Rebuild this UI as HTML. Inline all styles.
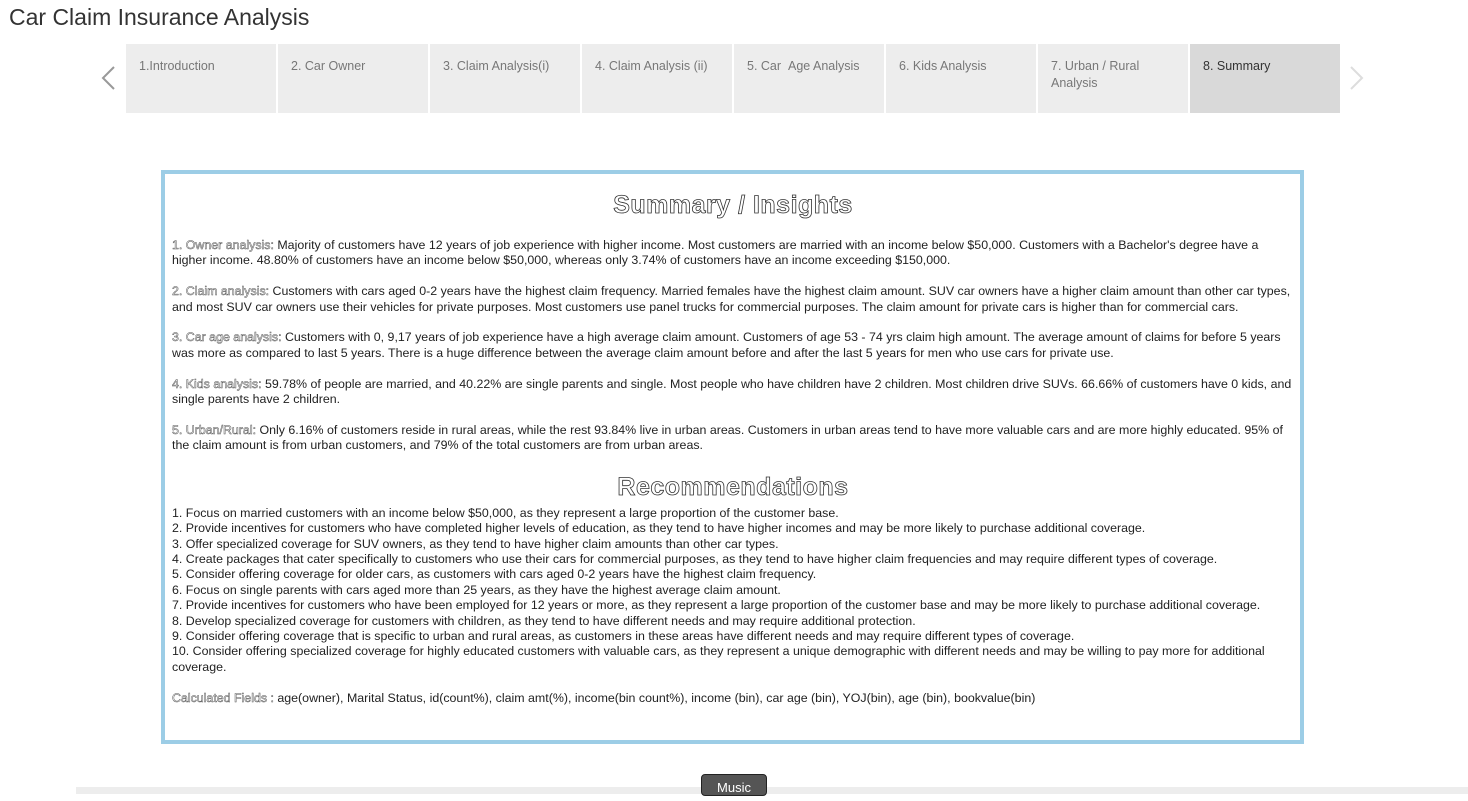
<!DOCTYPE html>
<html><head><meta charset="utf-8"><style>
body{margin:0;width:1468px;height:794px;background:#fff;font-family:"Liberation Sans",sans-serif;position:relative;overflow:hidden}
.title{position:absolute;left:9px;top:4px;font-size:23px;color:#333}
.tab{position:absolute;top:44px;width:150px;height:69px;background:#ededed;color:#777;font-size:12.5px;box-sizing:border-box;padding:14px 13px;line-height:17px}
.tab.sel{background:#d9d9d9;color:#333}
.arrow{position:absolute;top:66px;width:14px;height:24px}
.box{position:absolute;left:161px;top:170px;width:1143px;height:574px;border:4px solid #9ccde6;box-sizing:border-box;padding:0 6px 0 7px;font-size:12.4px;line-height:15.4px;color:#222}
h2{margin:0;text-align:center;font-size:25px;line-height:30px;font-weight:bold;color:#fff;-webkit-text-stroke:0.8px #333;letter-spacing:0.5px}
.o{color:#fff;-webkit-text-stroke:0.5px #555}
p{margin:0}
.bar{position:absolute;left:76px;top:787px;width:1392px;height:7px;background:#ededed}
.music{position:absolute;left:701px;top:774px;width:66px;height:22px;background:#555;border:1px solid #222;border-radius:4px;color:#fff;font-size:13px;text-align:center;line-height:26px;box-sizing:border-box}
</style></head><body>
<div class="title">Car Claim Insurance Analysis</div>
<svg class="arrow" style="left:101px" viewBox="0 0 14 24"><path d="M13 1L2 12l11 11" fill="none" stroke="#999" stroke-width="2"/></svg>
<svg class="arrow" style="left:1350px" viewBox="0 0 14 24"><path d="M1 1l11 11L1 23" fill="none" stroke="#ddd" stroke-width="2"/></svg>
<div class="tab" style="left:126px">1.Introduction</div>
<div class="tab" style="left:278px">2. Car Owner</div>
<div class="tab" style="left:430px">3. Claim Analysis(i)</div>
<div class="tab" style="left:582px">4. Claim Analysis (ii)</div>
<div class="tab" style="left:734px">5. Car &nbsp;Age Analysis</div>
<div class="tab" style="left:886px">6. Kids Analysis</div>
<div class="tab" style="left:1038px">7. Urban / Rural Analysis</div>
<div class="tab sel" style="left:1190px">8. Summary</div>
<div class="box">
<h2 style="margin-top:16px;margin-bottom:18px">Summary / Insights</h2>
<p><span class="o">1. Owner analysis:</span> Majority of customers have 12 years of job experience with higher income. Most customers are married with an income below $50,000. Customers with a Bachelor's degree have a higher income. 48.80% of customers have an income below $50,000, whereas only 3.74% of customers have an income exceeding $150,000.</p><br>
<p><span class="o">2. Claim analysis:</span> Customers with cars aged 0-2 years have the highest claim frequency. Married females have the highest claim amount. SUV car owners have a higher claim amount than other car types, and most SUV car owners use their vehicles for private purposes. Most customers use panel trucks for commercial purposes. The claim amount for private cars is higher than for commercial cars.</p><br>
<p><span class="o">3. Car age analysis:</span> Customers with 0, 9,17 years of job experience have a high average claim amount. Customers of age 53 - 74 yrs claim high amount. The average amount of claims for before 5 years was more as compared to last 5 years. There is a huge difference between the average claim amount before and after the last 5 years for men who use cars for private use.</p><br>
<p><span class="o">4. Kids analysis:</span> 59.78% of people are married, and 40.22% are single parents and single. Most people who have children have 2 children. Most children drive SUVs. 66.66% of customers have 0 kids, and single parents have 2 children.</p><br>
<p><span class="o">5. Urban/Rural:</span> Only 6.16% of customers reside in rural areas, while the rest 93.84% live in urban areas. Customers in urban areas tend to have more valuable cars and are more highly educated. 95% of the claim amount is from urban customers, and 79% of the total customers are from urban areas.</p>
<h2 style="margin-top:18px;margin-bottom:4px">Recommendations</h2>
<p>1. Focus on married customers with an income below $50,000, as they represent a large proportion of the customer base.<br>
2. Provide incentives for customers who have completed higher levels of education, as they tend to have higher incomes and may be more likely to purchase additional coverage.<br>
3. Offer specialized coverage for SUV owners, as they tend to have higher claim amounts than other car types.<br>
4. Create packages that cater specifically to customers who use their cars for commercial purposes, as they tend to have higher claim frequencies and may require different types of coverage.<br>
5. Consider offering coverage for older cars, as customers with cars aged 0-2 years have the highest claim frequency.<br>
6. Focus on single parents with cars aged more than 25 years, as they have the highest average claim amount.<br>
7. Provide incentives for customers who have been employed for 12 years or more, as they represent a large proportion of the customer base and may be more likely to purchase additional coverage.<br>
8. Develop specialized coverage for customers with children, as they tend to have different needs and may require additional protection.<br>
9. Consider offering coverage that is specific to urban and rural areas, as customers in these areas have different needs and may require different types of coverage.<br>
10. Consider offering specialized coverage for highly educated customers with valuable cars, as they represent a unique demographic with different needs and may be willing to pay more for additional coverage.</p><br>
<p><span class="o">Calculated Fields :</span> age(owner), Marital Status, id(count%), claim amt(%), income(bin count%), income (bin), car age (bin), YOJ(bin), age (bin), bookvalue(bin)</p>
</div>
<div class="bar"></div>
<div class="music">Music</div>
</body></html>
